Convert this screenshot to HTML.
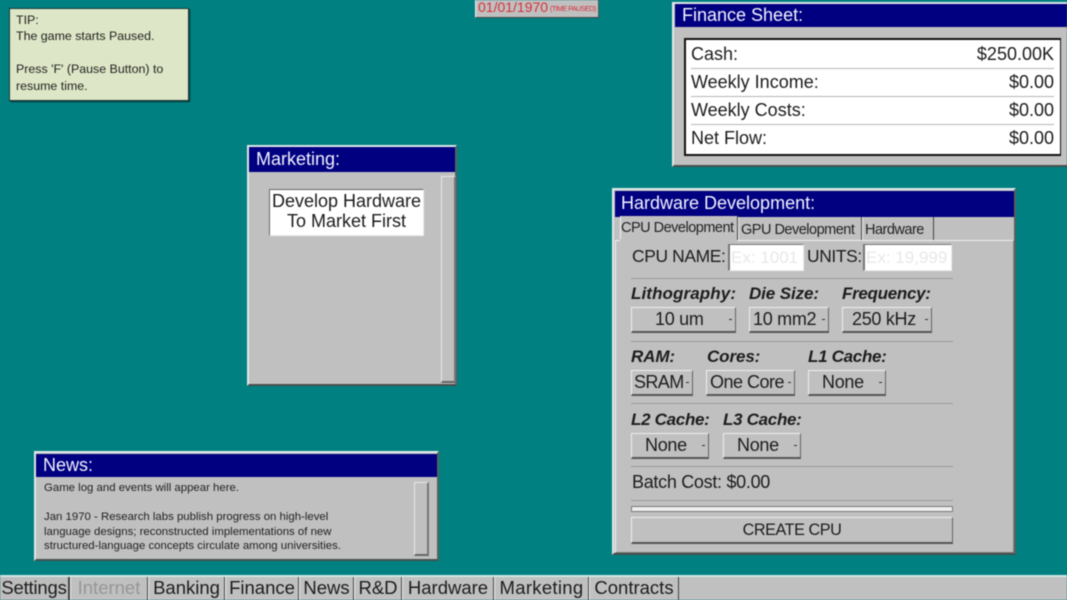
<!DOCTYPE html>
<html><head><meta charset="utf-8"><style>
html,body{margin:0;padding:0;width:1067px;height:600px;overflow:hidden;background:#008080}
#r{position:absolute;left:0;top:0;width:1067px;height:600px;overflow:hidden;background:#008080;font-family:"Liberation Sans",sans-serif;color:#1c1c1c;filter:blur(.4px)}
#r div{position:absolute;box-sizing:border-box}
.t{white-space:nowrap;line-height:20px;height:20px;font-size:18px}
.win{background:#c0c0c0;border:2px solid;border-color:#dfe8e8 #56605f #46504f #dfe8e8}
.bar{background:#000080;color:#f2f2ff;font-size:18px;line-height:23px;padding-left:7px;white-space:nowrap}
.btn{background:#c0c0c0;border:1px solid;border-color:#eee #666 #555 #eee;border-bottom-width:2px;text-align:center;font-size:16.2px;letter-spacing:-.45px;line-height:24px;white-space:nowrap}
.dd{background:#c0c0c0;border:1px solid;border-color:#eee #666 #555 #eee;border-bottom-width:2px;font-size:18px;line-height:23px;white-space:nowrap;letter-spacing:-.3px}
.dd b{position:absolute;right:3px;top:11px;width:3px;height:1px;background:#333}
.hr{height:1px;background:#9a9a9a;left:631px;width:322px}
.l{font-weight:bold;font-style:italic;font-size:17px;letter-spacing:-.1px}
.row{left:5px;width:363px;white-space:nowrap;font-size:18px;height:28px;line-height:28px}
.sep{left:5px;width:363px;height:1px;background:#b5b5b5}
.sb{background:#c0c0c0;border:1px solid;border-color:#e8e8e8 #777 #666 #e8e8e8;border-right-width:2px;border-bottom-width:2px}
.tb{top:577px;height:23px;background:#c0c0c0;border-right:1px solid #444;border-left:1px solid #f0f0f0;font-size:18.5px;line-height:22px;text-align:center;white-space:nowrap}
.tab{white-space:nowrap;font-size:14.5px;letter-spacing:-.5px;color:#222;background:#c0c0c0;border-left:1px solid #eee;border-right:1px solid #444;overflow:visible}
</style></head><body><div id="r">

<!-- Tip -->
<div style="left:8.5px;top:7.5px;width:180px;height:93px;background:#dde6c6;border:1px solid #1a3a3a;box-shadow:1px 1px 1px #0a3030;font-size:12.4px;line-height:16.4px;padding:3.5px 0 0 6.5px;white-space:nowrap;color:#222">TIP:<br>The game starts Paused.<br><br>Press 'F' (Pause Button) to<br>resume time.</div>

<!-- Date -->
<div style="left:475px;top:-2px;width:124px;height:20px;background:#c0c0c0;border:1px solid #eee;border-bottom:1px solid #444;border-right:1px solid #555;color:#d8303a;font-size:14px;line-height:16px;padding-left:2px;white-space:nowrap">01/01/1970 <span style="font-size:7px;letter-spacing:-.45px;vertical-align:1px;margin-left:-2px">(TIME PAUSED)</span></div>

<!-- Finance -->
<div class="win" style="left:672px;top:2px;width:400px;height:165px">
  <div class="bar" style="left:1px;top:0;width:395px;height:23px">Finance Sheet:</div>
  <div style="left:10px;top:34px;width:377px;height:118px;background:#fff;border:1px solid #111;border-width:2px 1px 2px 2px">
    <div class="row" style="top:0"><span>Cash:</span><span style="position:absolute;right:0">$250.00K</span></div>
    <div class="sep" style="top:28px"></div>
    <div class="row" style="top:28px"><span>Weekly Income:</span><span style="position:absolute;right:0">$0.00</span></div>
    <div class="sep" style="top:56px"></div>
    <div class="row" style="top:56px"><span>Weekly Costs:</span><span style="position:absolute;right:0">$0.00</span></div>
    <div class="sep" style="top:84px"></div>
    <div class="row" style="top:84px"><span>Net Flow:</span><span style="position:absolute;right:0">$0.00</span></div>
  </div>
</div>

<!-- Marketing -->
<div class="win" style="left:247px;top:145px;width:210px;height:241px">
  <div class="bar" style="left:0;top:0;width:206px;height:25px;line-height:24px">Marketing:</div>
  <div class="sb" style="left:192px;top:29px;width:15px;height:207px"></div>
  <div style="left:20px;top:42px;width:155px;height:47px;background:#fff;border:1px solid #eee;border-top-color:#666;border-left-color:#666;font-size:18px;line-height:20px;text-align:center;padding-top:1px;white-space:nowrap;color:#1c1c1c">Develop Hardware<br>To Market First</div>
</div>

<!-- News -->
<div class="win" style="left:34px;top:451px;width:405px;height:110px">
  <div class="bar" style="left:0;top:1px;width:401px;height:23px">News:</div>
  <div style="left:8px;top:28px;width:380px;font-size:11.4px;line-height:14.6px;white-space:nowrap;color:#222">Game log and events will appear here.<br><br>Jan 1970 - Research labs publish progress on high-level<br>language designs; reconstructed implementations of new<br>structured-language concepts circulate among universities.</div>
  <div class="sb" style="left:378px;top:29px;width:15px;height:74px"></div>
</div>

<!-- Hardware -->
<div class="win" style="left:612px;top:188px;width:404px;height:367px">
  <div class="bar" style="left:1px;top:1px;width:399px;height:26px;line-height:25px;padding-left:6px">Hardware Development:</div>
</div>
<div class="tab" style="left:620px;top:216px;width:118px;height:25px;line-height:25px;padding-left:0">CPU Development</div>
<div class="tab" style="left:738px;top:217px;width:124px;height:23px;line-height:27px;padding-left:2px">GPU Development</div>
<div class="tab" style="left:862px;top:217px;width:72px;height:23px;line-height:27px;padding-left:2px">Hardware</div>
<div style="left:615px;top:240px;width:399px;height:313px;background:#c0c0c0;border:1px solid;border-color:#eee #888 #777 #eee"></div>
<div style="left:620px;top:239px;width:117px;height:3px;background:#c0c0c0"></div>

<div class="t" style="left:632px;top:246px;font-size:17.4px;letter-spacing:-.35px">CPU NAME:</div>
<div style="left:728px;top:244px;width:76px;height:27px;background:#fff;border:1px solid #eee;border-top:1px solid #777;border-left:2px solid #777;color:#e8e8e8;font-size:17px;line-height:26px;padding-left:1px;white-space:nowrap;overflow:hidden">Ex: 1001</div>
<div class="t" style="left:807px;top:246px;font-size:17.4px;letter-spacing:-.35px">UNITS:</div>
<div style="left:863px;top:244px;width:89px;height:27px;background:#fff;border:1px solid #eee;border-top:1px solid #777;border-left:2px solid #777;color:#e8e8e8;font-size:17px;line-height:26px;padding-left:1px;white-space:nowrap;overflow:hidden">Ex: 19,999</div>
<div class="hr" style="top:278px"></div>

<div class="t l" style="left:631px;top:284px;letter-spacing:.1px">Lithography:</div>
<div class="t l" style="left:749px;top:284px">Die Size:</div>
<div class="t l" style="left:842px;top:284px;letter-spacing:-.3px">Frequency:</div>
<div class="dd" style="left:631px;top:307px;width:105px;height:26px;padding-left:23px">10 um<b></b></div>
<div class="dd" style="left:749px;top:307px;width:80px;height:26px;padding-left:3px">10 mm2<b></b></div>
<div class="dd" style="left:842px;top:307px;width:90px;height:26px;padding-left:9px">250 kHz<b></b></div>
<div class="hr" style="top:341px"></div>

<div class="t l" style="left:631px;top:347px">RAM:</div>
<div class="t l" style="left:707px;top:347px">Cores:</div>
<div class="t l" style="left:808px;top:347px;letter-spacing:-.3px">L1 Cache:</div>
<div class="dd" style="left:631px;top:370px;width:62px;height:26px;padding-left:2px;letter-spacing:-.6px">SRAM<b></b></div>
<div class="dd" style="left:706px;top:370px;width:89px;height:26px;padding-left:3px;letter-spacing:-.5px">One Core<b></b></div>
<div class="dd" style="left:808px;top:370px;width:78px;height:26px;padding-left:13px">None<b></b></div>
<div class="hr" style="top:403px"></div>

<div class="t l" style="left:631px;top:410px;letter-spacing:-.3px">L2 Cache:</div>
<div class="t l" style="left:723px;top:410px;letter-spacing:-.3px">L3 Cache:</div>
<div class="dd" style="left:631px;top:433px;width:78px;height:26px;padding-left:13px">None<b></b></div>
<div class="dd" style="left:723px;top:433px;width:78px;height:26px;padding-left:13px">None<b></b></div>
<div class="hr" style="top:466px"></div>

<div class="t" style="left:632px;top:472px;letter-spacing:-.3px">Batch Cost: $0.00</div>
<div class="hr" style="top:500px"></div>
<div style="left:631px;top:506px;width:322px;height:6px;background:#eee;border:1px solid #777;border-radius:1px"></div>
<div class="btn" style="left:631px;top:517px;width:322px;height:27px">CREATE CPU</div>

<!-- Taskbar -->
<div style="left:0;top:575px;width:1067px;height:25px;background:#c0c0c0;border-top:2px solid #cfe8e4"></div>
<div class="tb" style="left:0;width:70px;border-right:2px solid #444;border-left:0;background:#bdbdbd;letter-spacing:-.2px">Settings</div>
<div class="tb" style="left:70px;width:78px;color:#969696">Internet</div>
<div class="tb" style="left:148px;width:77px">Banking</div>
<div class="tb" style="left:225px;width:74px">Finance</div>
<div class="tb" style="left:299px;width:55px">News</div>
<div class="tb" style="left:354px;width:48px">R&amp;D</div>
<div class="tb" style="left:402px;width:92px">Hardware</div>
<div class="tb" style="left:494px;width:95px;letter-spacing:.3px">Marketing</div>
<div class="tb" style="left:589px;width:90px">Contracts</div>

</div></body></html>
